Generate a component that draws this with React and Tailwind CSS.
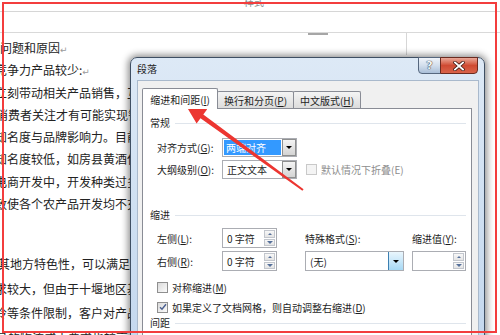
import React from 'react';

const CJK = "font-['Noto_Sans_CJK_SC','Noto_Sans',sans-serif]";

const topLines = [
  { text: '问题和原因', mark: true, cls: 'ml-[0px]' },
  { text: '竞争力产品较少:', mark: true, cls: '-ml-[5px]' },
  { text: '立刻带动相关产品销售，互联网', cls: '-ml-[5px]' },
  { text: '消费者关注才有可能实现销售', cls: '-ml-[4px]' },
  { text: '知名度与品牌影响力。目前', cls: '-ml-[5px]' },
  { text: '知名度较低，如房县黄酒仅', cls: '-ml-[5px]' },
  { text: '电商开发中，开发种类过多', cls: '-ml-[5px]' },
  { text: '致使各个农产品开发均不充', cls: '-ml-[5px]' },
];

const lowerLines = [
  { text: '其地方特色性，可以满足消', cls: '-ml-[2px]' },
  { text: '求较大，但由于十堰地区基', cls: '-ml-[5px]' },
  { text: '冷等条件限制，客户对产品', cls: '-ml-[5px]' },
  { text: '品的物流成本要求也较高', cls: '-ml-[4px]' },
];

const Acc = ({ children }) => <u className="underline decoration-1 underline-offset-[1px]">{children}</u>;

const Tri = ({ className }) => (
  <span className={`w-0 h-0 border-l-[3px] border-r-[3px] border-t-[3px] border-l-transparent border-r-transparent ${className}`} />
);

const TriUp = ({ className }) => (
  <span className={`w-0 h-0 border-l-[2.5px] border-r-[2.5px] border-b-[2.5px] border-l-transparent border-r-transparent ${className}`} />
);

const Header = ({ text }) => (
  <div className="flex items-center h-[14px] gap-[5px]">
    <span className="leading-[14px]">{text}</span>
    <div className="flex-1 h-px bg-[#dfe5ec]" />
  </div>
);

const DropArrow = ({ hot }) => (
  <div
    className={
      hot
        ? 'w-[15px] h-full border-l border-[#3c7fb1] bg-gradient-to-b from-[#eaf6fd] to-[#a7d9f5] flex items-center justify-center'
        : 'w-[14px] h-full border border-[#8e8f8f] bg-gradient-to-b from-[#f4f4f4] to-[#d4d4d4] flex items-center justify-center'
    }
  >
    <Tri className="border-t-black" />
  </div>
);

const Select = ({ width, children, selected, hot }) => (
  <div className={`flex h-full border border-[#abadb3] bg-white ${width}`}>
    <div className="flex-1 p-px flex">
      {selected ? (
        <div className="flex-1 bg-[#3399ff] text-white flex items-center pl-[2px]">{children}</div>
      ) : (
        <div className="flex-1 flex items-center pl-[3px]">{children}</div>
      )}
    </div>
    <DropArrow hot={hot} />
  </div>
);

const Spin = ({ width, value }) => (
  <div className={`flex h-full border border-[#abadb3] bg-white ${width}`}>
    <div className="flex-1 flex items-center pl-[4px]">{value}</div>
    <div className="w-[13px] h-full flex flex-col gap-px p-px">
      <div className="flex-1 border border-[#c2c6cd] bg-gradient-to-b from-[#f8f8f8] to-[#e4e4e4] flex items-center justify-center">
        <TriUp className="border-b-[#56709a]" />
      </div>
      <div className="flex-1 border border-[#c2c6cd] bg-gradient-to-b from-[#f8f8f8] to-[#e4e4e4] flex items-center justify-center">
        <Tri className="border-t-[#56709a] border-t-[2.5px] border-l-[2.5px] border-r-[2.5px]" />
      </div>
    </div>
  </div>
);

const Check = ({ checked, disabled }) => (
  <div
    className={
      disabled
        ? 'w-[11px] h-[11px] border border-[#c9c9c9] bg-[#f4f4f4]'
        : 'w-[11px] h-[11px] border border-[#8f8f8f] bg-gradient-to-br from-[#dadada] to-[#fbfbfb] flex items-center justify-center'
    }
  >
    {checked && (
      <svg width="8" height="8" viewBox="0 0 8 8">
        <path d="M1 4.2 L3 6.3 L7 1.2" fill="none" stroke="#4a5f8f" strokeWidth="1.4" />
      </svg>
    )}
  </div>
);

const Dialog = () => (
  <div className={`absolute left-[130px] top-[57px] w-[355px] h-[300px] rounded-t-[7px] border border-[#3f4f63] bg-gradient-to-b from-[#dde9f6] via-[#cfe0f2] to-[#c3d7ee] shadow-[0_0_7px_2px_rgba(0,0,0,0.45)] flex flex-col text-[#1e1e1e] ${CJK}`}>
    <div className="h-[22px] flex justify-between">
      <span className="pl-[6px] pt-[4px] text-[10px] leading-[14px]">段落</span>
      <div className="flex -mt-px mr-[6px] h-[17px]">
        <div className="w-[23px] h-full rounded-bl-[4px] border border-[#56677e] bg-gradient-to-b from-[#f0f4fa] via-[#d2deec] to-[#aabfd8] flex items-center justify-center text-[11px] font-bold leading-none text-[#f6f8fb] [text-shadow:0_0_1px_#1c2634,0_0_1px_#1c2634] font-['DejaVu_Sans',sans-serif]">
          ?
        </div>
        <div className="w-[38px] h-full -ml-px rounded-br-[4px] border border-[#6b2b20] bg-gradient-to-b from-[#e9a899] via-[#cf4a32] to-[#d9634a] flex items-center justify-center">
          <svg width="12" height="10" viewBox="0 0 12 10">
            <path d="M2 1.5 L10 8.5 M10 1.5 L2 8.5" stroke="#3b1610" strokeWidth="3.4" strokeLinecap="square" />
            <path d="M2 1.5 L10 8.5 M10 1.5 L2 8.5" stroke="#ffffff" strokeWidth="1.9" strokeLinecap="square" />
          </svg>
        </div>
      </div>
    </div>

    <div className="ml-[6px] mr-[5px] flex-1 border border-[#a9b9cc] bg-[#f0f0f0] pl-[4px] pr-[6px] pt-[7px] text-[10px]">
      <div className="flex items-end h-[20px]">
        <div className="relative z-10 w-[76px] h-[21px] -mb-px rounded-t-[2px] border border-b-0 border-[#898c95] bg-white flex items-center justify-center pt-px">
          缩进和间距(<Acc>I</Acc>)
        </div>
        <div className="w-[77px] h-[17px] -ml-px rounded-t-[2px] border border-b-0 border-[#898c95] bg-gradient-to-b from-[#f4f4f4] to-[#dcdcdc] flex items-center justify-center">
          换行和分页(<Acc>P</Acc>)
        </div>
        <div className="w-[68px] h-[17px] -ml-px rounded-t-[2px] border border-b-0 border-[#898c95] bg-gradient-to-b from-[#f4f4f4] to-[#dcdcdc] flex items-center justify-center">
          中文版式(<Acc>H</Acc>)
        </div>
      </div>

      <div className="border border-[#898c95] bg-white h-[240px] pl-[7px] pr-[5px] pt-[7px]">
        <Header text="常规" />
        <div className="mt-[8px] pl-[7px] flex flex-col gap-[3px]">
          <div className="flex items-center h-[19px]">
            <span className="w-[65px]">对齐方式(<Acc>G</Acc>):</span>
            <Select width="w-[75px]" selected>两端对齐</Select>
          </div>
          <div className="flex items-center h-[19px]">
            <span className="w-[65px]">大纲级别(<Acc>O</Acc>):</span>
            <Select width="w-[75px]">正文文本</Select>
            <div className="ml-[9px] flex items-center gap-[4px] text-[#8d8d8d]">
              <Check disabled />
              <span>默认情况下折叠(E)</span>
            </div>
          </div>
        </div>

        <div className="mt-[29px]">
          <Header text="缩进" />
        </div>
        <div className="mt-[6px] pl-[7px] flex">
          <div className="flex flex-col gap-[3px]">
            <div className="flex items-center h-[20px]">
              <span className="w-[65px]">左侧(<Acc>L</Acc>):</span>
              <Spin width="w-[55px]" value="0 字符" />
            </div>
            <div className="flex items-center h-[20px]">
              <span className="w-[65px]">右侧(<Acc>R</Acc>):</span>
              <Spin width="w-[55px]" value="0 字符" />
            </div>
          </div>
          <div className="ml-[28px] flex flex-col gap-[3px]">
            <div className="h-[20px] flex items-center">特殊格式(<Acc>S</Acc>):</div>
            <div className="h-[20px]">
              <Select width="w-[99px]" hot>(无)</Select>
            </div>
          </div>
          <div className="ml-[8px] flex flex-col gap-[3px]">
            <div className="h-[20px] flex items-center">缩进值(<Acc>Y</Acc>):</div>
            <div className="h-[20px]">
              <Spin width="w-[54px]" value="" />
            </div>
          </div>
        </div>

        <div className="mt-[9px] pl-[7px] h-[14px] flex items-center gap-[4px]">
          <Check />
          <span>对称缩进(<Acc>M</Acc>)</span>
        </div>
        <div className="mt-[6px] pl-[7px] h-[14px] flex items-center gap-[4px]">
          <Check checked />
          <span>如果定义了文档网格，则自动调整右缩进(<Acc>D</Acc>)</span>
        </div>
        <div className="mt-[2px]">
          <Header text="间距" />
        </div>
      </div>
    </div>
  </div>
);

const Arrow = () => (
  <svg className="absolute left-0 top-0 pointer-events-none" width="500" height="335" viewBox="0 0 500 335">
    <polygon
      points="185,104 207.2,109.3 203.3,114.6 303.6,189.3 302.4,190.8 200.5,118.3 196.6,123.5"
      fill="#ec3631"
    />
  </svg>
);

export default function App() {
  return (
    <div className={`relative w-[500px] h-[335px] overflow-hidden bg-white ${CJK}`}>
      <div className="h-[12px] border-b border-[#d6d6d6] overflow-hidden">
        <span className="block pl-[244px] -mt-[5px] text-[10px] leading-[14px] text-[#8c8c8c]">样式</span>
      </div>
      <div className="h-[21px] border-b border-[#d9d9d9]" />
      <div className="relative">
        <div className="absolute left-[308px] top-0 w-[20px] h-[2px] bg-[#a6a6a6]" />
        <div className="absolute left-[406px] top-0 w-px h-[22px] bg-[#d6d6d6]" />
        <div className="pt-[4px] text-[12px] text-[#222] whitespace-nowrap">
          {topLines.map((l, i) => (
            <div key={i} className={`h-[22.3px] leading-[22.3px] ${l.cls}`}>
              {l.text}
              {l.mark && <span className="text-[9px] text-[#9a9a9a] font-['DejaVu_Sans',sans-serif]">↵</span>}
            </div>
          ))}
          <div className="h-[37px]" />
          {lowerLines.map((l, i) => (
            <div key={i} className={`h-[24.5px] leading-[24.5px] ${l.cls}`}>
              {l.text}
            </div>
          ))}
        </div>
      </div>

      <Dialog />
      <Arrow />
      <div className="absolute left-[2px] top-[2px] w-[495px] h-[331px] border-2 border-[#f33d3d] pointer-events-none" />
    </div>
  );
}
